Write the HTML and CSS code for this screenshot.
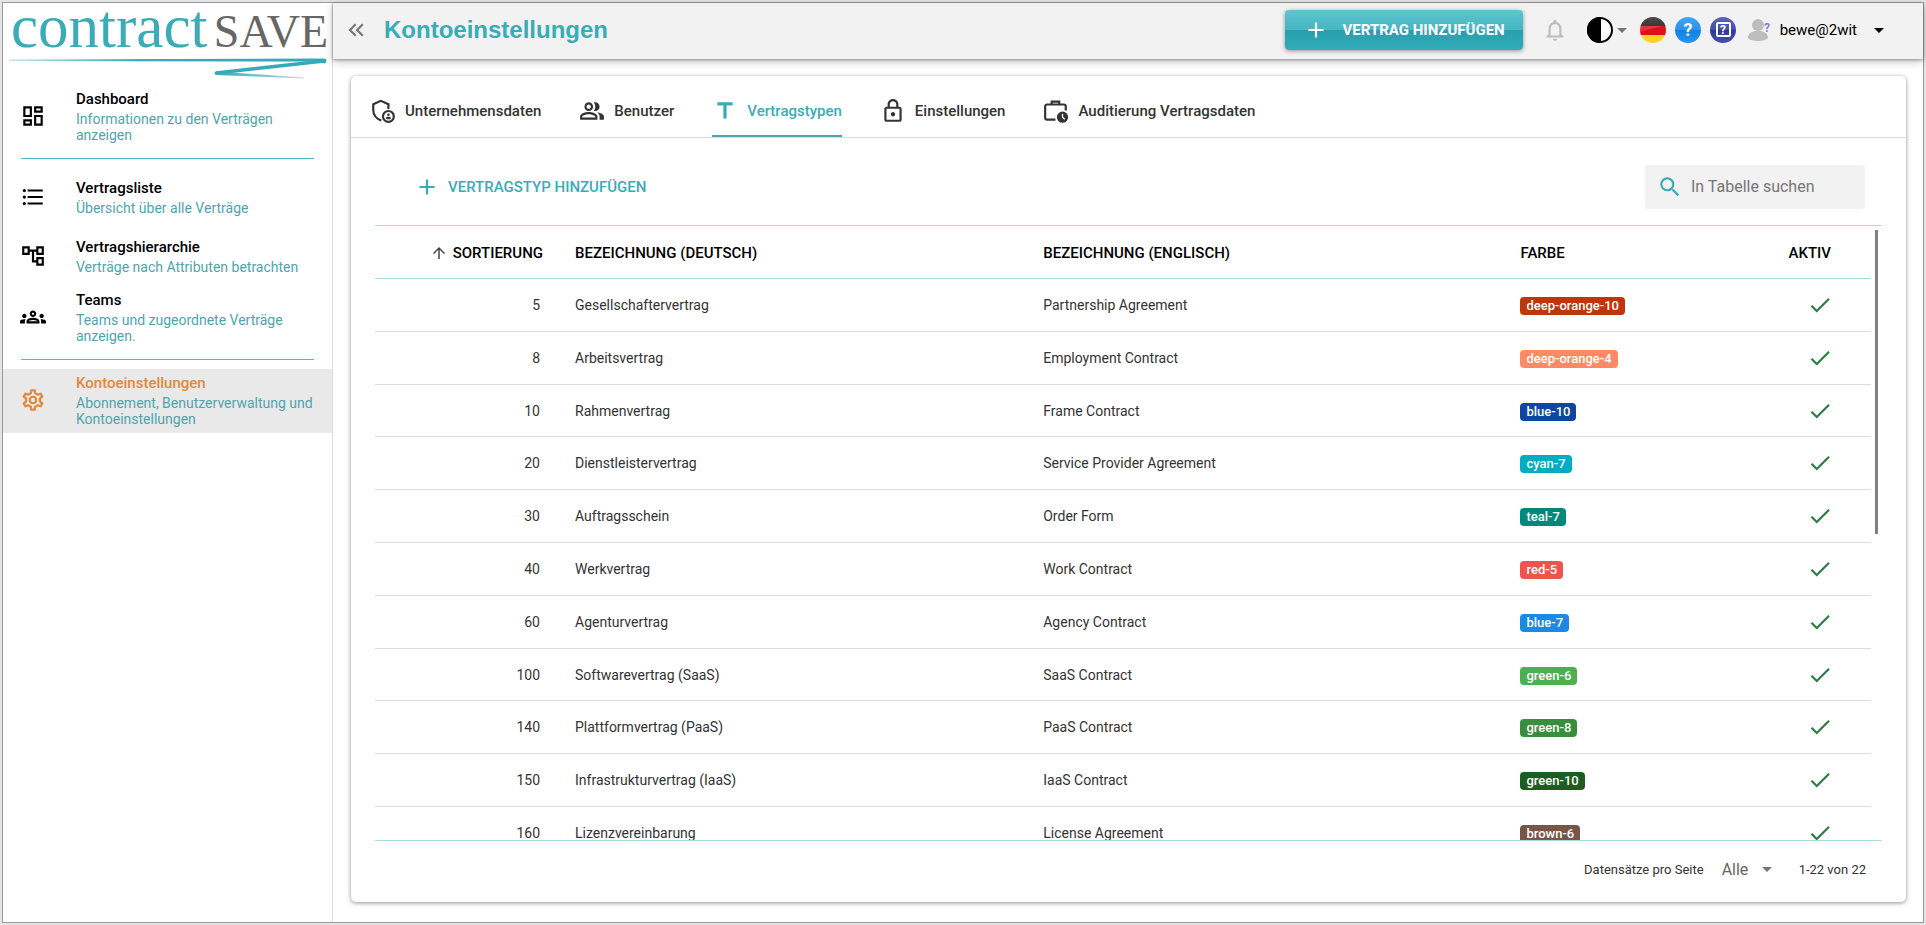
FILE: index.html
```html
<!DOCTYPE html>
<html lang="de">
<head>
<meta charset="utf-8">
<meta name="viewport" content="width=device-width, initial-scale=1">
<title>contractSAVE – Kontoeinstellungen</title>
<link rel="stylesheet" href="styles.css">
</head>
<body>
<svg class="sprite" aria-hidden="true">
  <symbol id="i-dashboard" viewBox="0 0 24 24"><path d="M19 5v2h-4V5h4M9 5v6H5V5h4m10 8v6h-4v-6h4M9 17v2H5v-2h4M21 3h-8v6h8V3zM11 3H3v10h8V3zm10 8h-8v10h8V11zm-10 4H3v6h8v-6z"/></symbol>
  <symbol id="i-list" viewBox="0 0 24 24"><path d="M4 10.5c-.83 0-1.5.67-1.5 1.5s.67 1.5 1.5 1.5 1.5-.67 1.5-1.5-.67-1.5-1.5-1.5zm0-6c-.83 0-1.5.67-1.5 1.5S3.17 7.5 4 7.5 5.5 6.83 5.5 6 4.83 4.5 4 4.5zm0 12c-.83 0-1.5.68-1.5 1.5s.68 1.5 1.5 1.5 1.5-.68 1.5-1.5-.67-1.5-1.5-1.5zM7 19h14v-2H7v2zm0-6h14v-2H7v2zm0-8v2h14V5H7z"/></symbol>
  <symbol id="i-tree" viewBox="0 0 24 24"><path d="M22 11V3h-7v3H9V3H2v8h7V8h2v10h4v3h7v-8h-7v3h-2V8h2v3h7zM7 9H4V5h3v4zm10 6h3v4h-3v-4zm0-10h3v4h-3V5z"/></symbol>
  <symbol id="i-groups" viewBox="0 0 24 24"><path d="M4 13c1.1 0 2-.9 2-2s-.9-2-2-2-2 .9-2 2 .9 2 2 2zm1.13 1.1C4.76 14.04 4.39 14 4 14c-.99 0-1.93.21-2.78.58C.48 14.9 0 15.62 0 16.43V18h4.5v-1.61c0-.83.23-1.61.63-2.29zM20 13c1.1 0 2-.9 2-2s-.9-2-2-2-2 .9-2 2 .9 2 2 2zm4 3.43c0-.81-.48-1.53-1.22-1.85C21.93 14.21 20.99 14 20 14c-.39 0-.76.04-1.13.1.4.68.63 1.46.63 2.29V18H24v-1.57zM16.24 13.65C15.07 13.13 13.63 12.75 12 12.75c-1.63 0-3.07.39-4.24.9C6.68 14.13 6 15.21 6 16.39V18h12v-1.61c0-1.18-.68-2.26-1.76-2.74zM8.07 16c.09-.23.13-.39.91-.69.97-.38 1.99-.56 3.02-.56s2.05.18 3.02.56c.77.3.81.46.91.69H8.07zM12 8c.55 0 1 .45 1 1s-.45 1-1 1-1-.45-1-1 .45-1 1-1m0-2c-1.66 0-3 1.34-3 3s1.34 3 3 3 3-1.34 3-3-1.34-3-3-3z"/></symbol>
  <symbol id="i-settings" viewBox="0 0 24 24"><path d="M19.43 12.98c.04-.32.07-.64.07-.98 0-.34-.03-.66-.07-.98l2.11-1.65c.19-.15.24-.42.12-.64l-2-3.46c-.09-.16-.26-.25-.44-.25-.06 0-.12.01-.17.03l-2.49 1c-.52-.4-1.08-.73-1.69-.98l-.38-2.65C14.46 2.18 14.25 2 14 2h-4c-.25 0-.46.18-.49.42l-.38 2.65c-.61.25-1.17.59-1.69.98l-2.49-1c-.06-.02-.12-.03-.18-.03-.17 0-.34.09-.43.25l-2 3.46c-.13.22-.07.49.12.64l2.11 1.65c-.04.32-.07.65-.07.98 0 .33.03.66.07.98l-2.11 1.65c-.19.15-.24.42-.12.64l2 3.46c.09.16.26.25.44.25.06 0 .12-.01.17-.03l2.49-1c.52.4 1.08.73 1.69.98l.38 2.65c.03.24.24.42.49.42h4c.25 0 .46-.18.49-.42l.38-2.65c.61-.25 1.17-.59 1.69-.98l2.49 1c.06.02.12.03.18.03.17 0 .34-.09.43-.25l2-3.46c.12-.22.07-.49-.12-.64l-2.11-1.65zm-1.98-1.71c.04.31.05.52.05.73 0 .21-.02.43-.05.73l-.14 1.13.89.7 1.08.84-.7 1.21-1.27-.51-1.04-.42-.9.68c-.43.32-.84.56-1.25.73l-1.06.43-.16 1.13-.2 1.35h-1.4l-.19-1.35-.16-1.13-1.06-.43c-.43-.18-.83-.41-1.23-.71l-.91-.7-1.06.43-1.27.51-.7-1.21 1.08-.84.89-.7-.14-1.13c-.03-.31-.05-.54-.05-.74s.02-.43.05-.73l.14-1.13-.89-.7-1.08-.84.7-1.21 1.27.51 1.04.42.9-.68c.43-.32.84-.56 1.25-.73l1.06-.43.16-1.13.2-1.35h1.39l.19 1.35.16 1.13 1.06.43c.43.18.83.41 1.23.71l.91.7 1.06-.43 1.27-.51.7 1.21-1.07.85-.89.7.14 1.13zM12 8c-2.21 0-4 1.79-4 4s1.79 4 4 4 4-1.79 4-4-1.79-4-4-4zm0 6c-1.1 0-2-.9-2-2s.9-2 2-2 2 .9 2 2-.9 2-2 2z"/></symbol>
  <symbol id="i-collapse" viewBox="0 0 24 24"><path d="M17.59 18 19 16.59 14.42 12 19 7.41 17.59 6l-6 6zM11 18l1.41-1.41L7.83 12l4.58-4.59L11 6l-6 6z"/></symbol>
  <symbol id="i-add" viewBox="0 0 24 24"><path d="M19 13h-6v6h-2v-6H5v-2h6V5h2v6h6z"/></symbol>
  <symbol id="i-bell" viewBox="0 0 24 24"><path d="M12 22c1.1 0 2-.9 2-2h-4c0 1.1.9 2 2 2zm6-6v-5c0-3.07-1.63-5.64-4.5-6.32V4c0-.83-.67-1.5-1.5-1.5s-1.5.67-1.5 1.5v.68C7.64 5.36 6 7.92 6 11v5l-2 2v1h16v-1l-2-2zm-2 1H8v-6c0-2.48 1.51-4.5 4-4.5s4 2.02 4 4.5v6z"/></symbol>
  <symbol id="i-drop" viewBox="0 0 10 5"><path d="M0 0l5 5 5-5z"/></symbol>
  <symbol id="i-search" viewBox="0 0 24 24"><path d="M15.5 14h-.79l-.28-.27A6.471 6.471 0 0 0 16 9.5 6.5 6.5 0 1 0 9.5 16c1.61 0 3.09-.59 4.23-1.57l.27.28v.79l5 4.99L20.49 19l-4.99-5zm-6 0C7.01 14 5 11.99 5 9.5S7.01 5 9.5 5 14 7.01 14 9.5 11.99 14 9.5 14z"/></symbol>
  <symbol id="i-check" viewBox="0 0 24 24"><path d="M9 16.17 4.83 12l-1.42 1.41L9 19 21 7l-1.41-1.41z"/></symbol>
  <symbol id="i-up" viewBox="0 0 24 24"><path d="M4 12l1.41 1.41L11 7.83V20h2V7.83l5.58 5.59L20 12l-8-8z"/></symbol>
  <symbol id="i-people" viewBox="0 0 24 24"><path d="M16.67 13.13C18.04 14.06 19 15.32 19 17v3h4v-3c0-2.18-3.57-3.47-6.33-3.87zM15 12c2.21 0 4-1.79 4-4s-1.79-4-4-4c-.47 0-.91.1-1.33.24C14.5 5.27 15 6.58 15 8s-.5 2.73-1.33 3.76c.42.14.86.24 1.33.24zM9 12c2.21 0 4-1.79 4-4s-1.79-4-4-4-4 1.79-4 4 1.79 4 4 4zm0-6c1.1 0 2 .9 2 2s-.9 2-2 2-2-.9-2-2 .9-2 2-2zM9 13c-2.67 0-8 1.34-8 4v3h16v-3c0-2.66-5.33-4-8-4zm6 5H3v-.99C3.2 16.29 6.3 15 9 15s5.8 1.29 6 2v1z"/></symbol>
  <symbol id="i-title" viewBox="0 0 24 24"><path d="M5 4v3h5.500v12h3V7H19V4z"/></symbol>
  <symbol id="i-lock" viewBox="0 0 24 24"><path d="M12 17c1.1 0 2-.9 2-2s-.9-2-2-2-2 .9-2 2 .9 2 2 2zm6-9h-1V6c0-2.760-2.240-5-5-5S7 3.240 7 6v2H6c-1.100 0-2 .9-2 2v10c0 1.100.9 2 2 2h12c1.100 0 2-.9 2-2V10c0-1.100-.9-2-2-2zM9 6c0-1.660 1.340-3 3-3s3 1.340 3 3v2H9V6zm9 14H6V10h12v10z"/></symbol>
  <symbol id="i-shield" viewBox="0 0 24 24"><g fill="none" stroke="currentColor" stroke-width="2"><path d="M10.500 20.700C5.800 19.300 3 15.200 3 11V5.700L10 2.600l7 3.100v4.500"/><circle cx="17" cy="17" r="5"/></g><circle cx="17" cy="15.500" r="1.200"/><path d="M14.600 18.600c.4-.9 1.400-1.200 2.400-1.200s2 .3 2.400 1.200c-.5.700-1.400 1.100-2.400 1.100s-1.900-.4-2.400-1.100z"/></symbol>
  <symbol id="i-case" viewBox="0 0 24 24"><path d="M11.500 20H3.800a1.800 1.800 0 0 1-1.800-1.800V7.800A1.800 1.800 0 0 1 3.800 6h15.400A1.800 1.800 0 0 1 21 7.800v3.700M8 6V3.400h7V6" fill="none" stroke="currentColor" stroke-width="2"/><path d="M18 12.500a5.200 5.200 0 1 0 0 10.400 5.200 5.200 0 0 0 0-10.400zm1.700 7.600-2.300-2.200v-3.300h1.200v2.800l1.900 1.900z" fill-rule="evenodd"/></symbol>
</svg>

<div class="app">
  <aside class="sidebar">
    <div class="logo">
      <div class="wordmark"><span class="word-a">contract</span><span class="word-b">SAVE</span></div>
      <svg class="swoosh" viewBox="0 0 320 24" aria-hidden="true">
        <defs>
          <linearGradient id="fade" x1="0" x2="1"><stop offset="0" stop-color="#35aab8" stop-opacity=".3"/><stop offset=".4" stop-color="#35aab8"/></linearGradient>
          <linearGradient id="fade2" x1="0" x2="1"><stop offset="0" stop-color="#35aab8"/><stop offset="1" stop-color="#35aab8" stop-opacity=".35"/></linearGradient>
        </defs>
        <path d="M0 1.500 316 0.500a2 2 0 0 1 0 5L314 3.500 0 3z" fill="url(#fade)"/>
        <path d="M316 3 208 15" stroke="#35aab8" stroke-width="3.500" stroke-linecap="round"/>
        <path d="M208 13.500 296 19.500v1L207 17z" fill="url(#fade2)"/>
      </svg>
    </div>
    <nav class="nav" aria-label="Hauptnavigation">
      <a class="nav-item" href="#dashboard"><svg class="icon"><use href="#i-dashboard"/></svg><span class="nav-text"><span class="nav-title">Dashboard</span><span class="nav-sub">Informationen zu den Verträgen anzeigen</span></span></a>
      <hr class="rule">
      <a class="nav-item" href="#liste"><svg class="icon"><use href="#i-list"/></svg><span class="nav-text"><span class="nav-title">Vertragsliste</span><span class="nav-sub">Übersicht über alle Verträge</span></span></a>
      <a class="nav-item" href="#hierarchie"><svg class="icon"><use href="#i-tree"/></svg><span class="nav-text"><span class="nav-title">Vertragshierarchie</span><span class="nav-sub">Verträge nach Attributen betrachten</span></span></a>
      <a class="nav-item" href="#teams"><svg class="icon"><use href="#i-groups"/></svg><span class="nav-text"><span class="nav-title">Teams</span><span class="nav-sub">Teams und zugeordnete Verträge anzeigen.</span></span></a>
      <hr class="rule">
      <a class="nav-item nav-active" href="#konto" aria-current="page"><svg class="icon"><use href="#i-settings"/></svg><span class="nav-text"><span class="nav-title">Kontoeinstellungen</span><span class="nav-sub">Abonnement, Benutzerverwaltung und Kontoeinstellungen</span></span></a>
    </nav>
  </aside>

  <div class="main">
    <header class="topbar">
      <button class="plain collapse" type="button" aria-label="Menü einklappen"><svg class="icon"><use href="#i-collapse"/></svg></button>
      <h1 class="page-title">Kontoeinstellungen</h1>
      <button class="add-contract" type="button"><svg class="icon"><use href="#i-add"/></svg>VERTRAG HINZUFÜGEN</button>
      <button class="plain bell" type="button" aria-label="Benachrichtigungen"><svg class="icon"><use href="#i-bell"/></svg></button>
      <div class="tools">
        <button class="plain contrast" type="button" aria-label="Kontrast"><svg class="badge" viewBox="0 0 26 26"><circle cx="13" cy="13" r="12" fill="#fff" stroke="#000" stroke-width="2"/><path d="M14 0H13a13 13 0 0 0 0 26h1z"/></svg><svg class="drop muted"><use href="#i-drop"/></svg></button>
        <button class="plain" type="button" aria-label="Sprache: Deutsch"><svg class="badge" viewBox="0 0 26 26"><defs><clipPath id="disc"><circle cx="13" cy="13" r="13"/></clipPath><linearGradient id="gloss" x2="0" y2="1"><stop offset="0" stop-color="#fff" stop-opacity=".25"/><stop offset="1" stop-color="#fff" stop-opacity=".12"/></linearGradient></defs><g clip-path="url(#disc)"><path fill="#140e0c" d="M0 0h26v9H0z"/><path fill="#e0101a" d="M0 9h26v9H0z"/><path fill="#ffd21f" d="M0 18h26v8H0z"/><path fill="url(#gloss)" d="M0 0h26v9Q14 10 0 15z"/></g></svg></button>
        <button class="plain" type="button" aria-label="Hilfe"><svg class="badge" viewBox="0 0 26 26"><defs><linearGradient id="blue" x2="0" y2="1"><stop offset="0" stop-color="#42a5f5"/><stop offset=".5" stop-color="#2b92ec"/><stop offset=".5" stop-color="#1480e0"/><stop offset="1" stop-color="#2196f3"/></linearGradient></defs><circle cx="13" cy="13" r="13" fill="url(#blue)"/><text class="mark mark-lg" x="13" y="19">?</text></svg></button>
        <button class="plain" type="button" aria-label="Handbuch"><svg class="badge" viewBox="0 0 26 26"><defs><linearGradient id="indigo" x2="0" y2="1"><stop offset="0" stop-color="#5a64bd"/><stop offset=".5" stop-color="#414cae"/><stop offset=".5" stop-color="#2c3796"/><stop offset="1" stop-color="#4450b4"/></linearGradient></defs><circle cx="13" cy="13" r="13" fill="url(#indigo)"/><rect x="7" y="6" width="13" height="13" rx="1" fill="none" stroke="#fff" stroke-width="2"/><text class="mark mark-sm" x="13" y="17">?</text></svg></button>
      </div>
      <button class="plain user" type="button"><svg class="avatar" viewBox="0 0 24 24" aria-hidden="true"><circle cx="11" cy="7" r="6" fill="#bdbdbd"/><path d="M1 20c0-5 4-6 7-7h6c3 1 7 2 7 7-3 4-17 4-20 0z" fill="#bdbdbd"/><text class="mark mark-user" x="20" y="14">?</text></svg><span>bewe@2wit</span><svg class="drop"><use href="#i-drop"/></svg></button>
    </header>

    <main class="content">
      <section class="card">
        <nav class="tabs" aria-label="Kontobereiche">
          <a class="tab" href="#unternehmen"><svg class="icon"><use href="#i-shield"/></svg>Unternehmensdaten</a>
          <a class="tab" href="#benutzer"><svg class="icon"><use href="#i-people"/></svg>Benutzer</a>
          <a class="tab tab-active" href="#vertragstypen" aria-current="true"><svg class="icon"><use href="#i-title"/></svg>Vertragstypen</a>
          <a class="tab" href="#einstellungen"><svg class="icon"><use href="#i-lock"/></svg>Einstellungen</a>
          <a class="tab" href="#audit"><svg class="icon"><use href="#i-case"/></svg>Auditierung Vertragsdaten</a>
        </nav>
        <div class="panel">
          <div class="toolbar">
            <button class="plain add-type" type="button"><svg class="icon"><use href="#i-add"/></svg>VERTRAGSTYP HINZUFÜGEN</button>
            <label class="search"><svg class="icon"><use href="#i-search"/></svg><input type="search" placeholder="In Tabelle suchen" aria-label="In Tabelle suchen"></label>
          </div>
          <div class="table-frame">
            <div class="table-scroll">
              <table class="types">
                <thead><tr><th class="c-sort"><span class="sorted"><svg class="sort-icon"><use href="#i-up"/></svg>SORTIERUNG</span></th><th class="c-name">BEZEICHNUNG (DEUTSCH)</th><th class="c-name-en">BEZEICHNUNG (ENGLISCH)</th><th class="c-color">FARBE</th><th class="c-active">AKTIV</th></tr></thead>
                <tbody>
                  <tr><td class="c-sort">5</td><td>Gesellschaftervertrag</td><td>Partnership Agreement</td><td><span class="chip deep-orange-10">deep-orange-10</span></td><td class="c-active"><svg class="icon" role="img" aria-label="aktiv"><use href="#i-check"/></svg></td></tr>
                  <tr><td class="c-sort">8</td><td>Arbeitsvertrag</td><td>Employment Contract</td><td><span class="chip deep-orange-4">deep-orange-4</span></td><td class="c-active"><svg class="icon" role="img" aria-label="aktiv"><use href="#i-check"/></svg></td></tr>
                  <tr><td class="c-sort">10</td><td>Rahmenvertrag</td><td>Frame Contract</td><td><span class="chip blue-10">blue-10</span></td><td class="c-active"><svg class="icon" role="img" aria-label="aktiv"><use href="#i-check"/></svg></td></tr>
                  <tr><td class="c-sort">20</td><td>Dienstleistervertrag</td><td>Service Provider Agreement</td><td><span class="chip cyan-7">cyan-7</span></td><td class="c-active"><svg class="icon" role="img" aria-label="aktiv"><use href="#i-check"/></svg></td></tr>
                  <tr><td class="c-sort">30</td><td>Auftragsschein</td><td>Order Form</td><td><span class="chip teal-7">teal-7</span></td><td class="c-active"><svg class="icon" role="img" aria-label="aktiv"><use href="#i-check"/></svg></td></tr>
                  <tr><td class="c-sort">40</td><td>Werkvertrag</td><td>Work Contract</td><td><span class="chip red-5">red-5</span></td><td class="c-active"><svg class="icon" role="img" aria-label="aktiv"><use href="#i-check"/></svg></td></tr>
                  <tr><td class="c-sort">60</td><td>Agenturvertrag</td><td>Agency Contract</td><td><span class="chip blue-7">blue-7</span></td><td class="c-active"><svg class="icon" role="img" aria-label="aktiv"><use href="#i-check"/></svg></td></tr>
                  <tr><td class="c-sort">100</td><td>Softwarevertrag (SaaS)</td><td>SaaS Contract</td><td><span class="chip green-6">green-6</span></td><td class="c-active"><svg class="icon" role="img" aria-label="aktiv"><use href="#i-check"/></svg></td></tr>
                  <tr><td class="c-sort">140</td><td>Plattformvertrag (PaaS)</td><td>PaaS Contract</td><td><span class="chip green-8">green-8</span></td><td class="c-active"><svg class="icon" role="img" aria-label="aktiv"><use href="#i-check"/></svg></td></tr>
                  <tr><td class="c-sort">150</td><td>Infrastrukturvertrag (IaaS)</td><td>IaaS Contract</td><td><span class="chip green-10">green-10</span></td><td class="c-active"><svg class="icon" role="img" aria-label="aktiv"><use href="#i-check"/></svg></td></tr>
                  <tr><td class="c-sort">160</td><td>Lizenzvereinbarung</td><td>License Agreement</td><td><span class="chip brown-6">brown-6</span></td><td class="c-active"><svg class="icon" role="img" aria-label="aktiv"><use href="#i-check"/></svg></td></tr>
                </tbody>
              </table>
            </div>
            <div class="scroll-thumb"></div>
          </div>
          <div class="pager">
            <label for="page-size">Datensätze pro Seite</label>
            <span class="select"><select id="page-size"><option>Alle</option></select><svg class="drop muted"><use href="#i-drop"/></svg></span>
            <span class="range">1-22 von 22</span>
          </div>
        </div>
      </section>
    </main>
  </div>
</div>
</body>
</html>
```

FILE: styles.css
```css
:root {
  --teal: #39acb8;
  --teal-text: #4fa5ae;
  --line: #a9dbe1;
}

* {
  box-sizing: border-box;
}

body {
  margin: 0;
  padding: 2px;
  height: 100vh;
  background: #e4e4e4;
  color: #000;
  font: 15px/20px Roboto, sans-serif;
}

a {
  color: inherit;
  text-decoration: none;
}

svg {
  display: block;
  flex: none;
  fill: currentColor;
}

.sprite {
  position: absolute;
  width: 0;
  height: 0;
}

.icon {
  width: 26px;
  height: 26px;
}

.drop {
  width: 10px;
  height: 5px;
}

.muted {
  color: #777;
}

.plain {
  display: flex;
  align-items: center;
  padding: 0;
  border: 0;
  background: none;
  color: inherit;
  font: inherit;
}

.app {
  display: flex;
  height: 100%;
  border: 1px solid #9b9b9b;
  background: #fff;
}

/* Sidebar */

.sidebar {
  flex: none;
  width: 330px;
  border-right: 1px solid #dcdcdc;
}

.logo {
  height: 82px;
  padding: 1px 4px 0 6px;
}

.wordmark {
  display: flex;
  align-items: baseline;
  justify-content: space-between;
  height: 54px;
  padding: 0 0 0 2px;
  font-family: "Liberation Serif", serif;
  line-height: 46px;
}

.word-a {
  color: var(--teal);
  font-size: 61px;
}

.word-b {
  color: #666;
  font-size: 46px;
}

.swoosh {
  width: 100%;
}

.nav-item {
  display: flex;
  align-items: center;
  min-height: 59px;
  padding: 4px 12px 6px 17px;
}

.nav-text {
  display: flex;
  flex-direction: column;
  gap: 2px;
  margin-left: 30px;
}

.nav-title {
  font-weight: 500;
}

.nav-sub {
  color: var(--teal-text);
  font-size: 14px;
  line-height: 16px;
}

.rule {
  height: 1px;
  margin: 9px 18px;
  border: 0;
  background: #4fb9c4;
}

.nav-active {
  background: #e9e9e9;
  color: #e2883b;
}

/* Top bar */

.main {
  display: flex;
  flex: 1;
  flex-direction: column;
  min-width: 0;
}

.topbar {
  display: flex;
  flex: none;
  align-items: center;
  height: 56px;
  padding: 0 39px 2px 10px;
  background: #f2f2f2;
  box-shadow: 0 1px 3px rgba(0, 0, 0, .35), 0 3px 9px rgba(0, 0, 0, .2);
}

.collapse {
  color: #777;
}

.page-title {
  margin: 0 auto 0 15px;
  color: var(--teal);
  font: bold 24px/32px "Liberation Sans", sans-serif;
}

.add-contract {
  display: flex;
  align-items: center;
  gap: 14px;
  height: 40px;
  padding: 0 18px;
  border: 0;
  border-radius: 4px;
  background: linear-gradient(#5ec5d0, #45b6c2 50%, #289eac 50%, #31adb9);
  box-shadow: 0 1px 4px rgba(0, 0, 0, .4);
  color: #fff;
  font: bold 15px/20px Roboto, sans-serif;
}

.bell {
  margin-left: 19px;
  color: #bdbdbd;
}

.tools {
  display: flex;
  gap: 9px;
  margin-left: 19px;
}

.contrast {
  gap: 4px;
  margin-right: 4px;
}

.badge {
  width: 26px;
  height: 26px;
}

.mark {
  fill: #fff;
  font-family: Roboto, sans-serif;
  font-weight: bold;
  text-anchor: middle;
}

.mark-lg {
  font-size: 18px;
}

.mark-sm {
  font-size: 12px;
}

.mark-user {
  fill: #7b7fe0;
  font-size: 12px;
}

.user {
  gap: 9px;
  margin-left: 11px;
}

.user .drop {
  margin-left: 8px;
}

.avatar {
  width: 24px;
  height: 24px;
}

/* Card */

.content {
  display: flex;
  flex: 1;
  min-height: 0;
  padding: 17px 17px 20px 18px;
}

.card {
  display: flex;
  flex: 1;
  flex-direction: column;
  min-width: 0;
  border-radius: 5px;
  box-shadow: 0 1px 4px rgba(0, 0, 0, .45);
}

.tabs {
  display: flex;
  flex: none;
  gap: 38px;
  height: 62px;
  padding: 8px 19px 0;
  border-bottom: 1px solid #d8dcdd;
  color: #333;
  font-weight: 500;
}

.tab {
  display: flex;
  align-items: center;
  gap: 9px;
  height: 53px;
  padding-top: 2px;
  border-bottom: 2px solid transparent;
}

.tab-active {
  border-color: var(--teal-text);
  color: var(--teal);
}

.panel {
  display: flex;
  flex: 1;
  flex-direction: column;
  min-height: 0;
  padding: 0 24px;
}

.toolbar {
  display: flex;
  align-items: center;
  justify-content: space-between;
  height: 87px;
  padding: 10px 17px 0 39px;
}

.add-type {
  gap: 8px;
  color: var(--teal);
  font-weight: 500;
}

.search {
  display: flex;
  align-items: center;
  gap: 8px;
  width: 220px;
  height: 44px;
  padding: 0 12px;
  border-radius: 4px;
  background: #f2f2f2;
  color: var(--teal);
}

.search input {
  width: 100%;
  min-width: 0;
  padding: 0;
  border: 0;
  outline: 0;
  background: none;
  color: #333;
  font: 16px/20px Roboto, sans-serif;
}

.search input::placeholder {
  color: #777;
}

.table-frame {
  position: relative;
  flex: 1;
  min-height: 0;
  border: solid var(--line);
  border-width: 1px 0;
}

.table-scroll {
  height: 100%;
  padding-right: 11px;
  overflow: hidden;
}

.scroll-thumb {
  position: absolute;
  top: 4px;
  right: 4px;
  width: 3px;
  height: 304px;
  background: #808080;
}

.types {
  width: 100%;
  border-collapse: separate;
  border-spacing: 0;
  table-layout: fixed;
}

.types th,
.types td {
  height: 53px;
  padding: 0 16px;
  border-bottom: 1px solid #dcdcdc;
  text-align: left;
}

.types td {
  color: #333;
  font-size: 14px;
}

.types tr:nth-child(5n + 3) td {
  height: 52px;
}

.types th {
  padding-top: 2px;
  border-color: var(--line);
  font-size: 15px;
  font-weight: 500;
}

.types .c-sort {
  width: 12.3%;
  text-align: right;
}

.types td.c-sort {
  padding-right: 19px;
}

.c-name {
  width: 31.3%;
}

.c-name-en {
  width: 31.9%;
}

.c-color {
  width: 12%;
}

.types .c-active {
  padding-right: 40px;
  text-align: right;
}

.types td.c-active {
  padding-right: 38px;
}

.c-active .icon {
  display: inline-block;
  vertical-align: middle;
  color: #2c7d42;
}

.sorted {
  display: flex;
  align-items: center;
  justify-content: flex-end;
  gap: 5px;
}

.sort-icon {
  width: 18px;
  height: 18px;
  color: #444;
}

.chip {
  display: inline-block;
  padding: 0 6px;
  border-radius: 4px;
  color: #fff;
  font-size: 13px;
  font-weight: 500;
  line-height: 18px;
  vertical-align: middle;
}

.deep-orange-10 { background: #bf360c; }
.deep-orange-4 { background: #ff8a65; }
.blue-10 { background: #0d47a1; }
.cyan-7 { background: #00acc1; }
.teal-7 { background: #00897b; }
.red-5 { background: #ef5350; }
.blue-7 { background: #1e88e5; }
.green-6 { background: #4caf50; }
.green-8 { background: #388e3c; }
.green-10 { background: #1b5e20; }
.brown-6 { background: #795548; }

/* Pager */

.pager {
  display: flex;
  align-items: center;
  justify-content: flex-end;
  height: 61px;
  padding: 0 16px 4px 0;
  color: #333;
  font-size: 13px;
}

.select {
  display: flex;
  align-items: center;
  margin: 0 27px 0 18px;
}

.select select {
  width: 40px;
  padding: 0;
  border: 0;
  background: none;
  color: #666;
  font: 16px/20px Roboto, sans-serif;
  appearance: none;
}
```
